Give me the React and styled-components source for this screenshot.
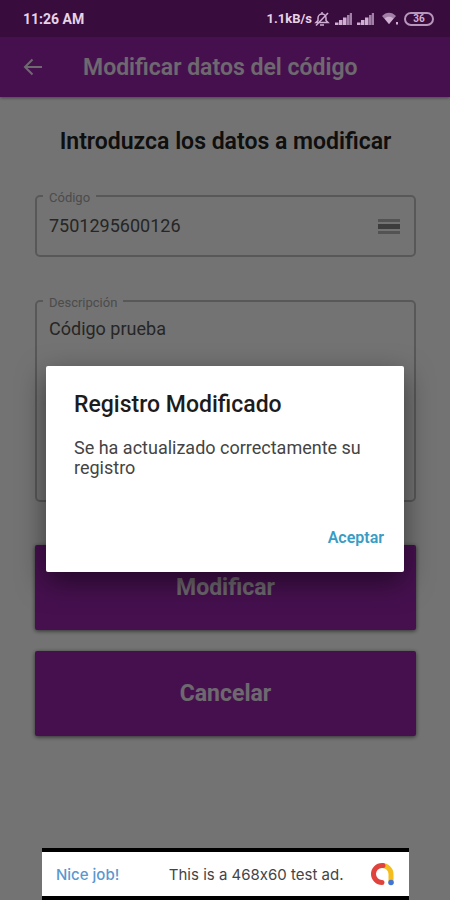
import React, { useState } from 'react';
import styled, { createGlobalStyle } from 'styled-components';

const App = () => {
    const [code, setCode] = useState('7501295600126');
    const [description, setDescription] = useState('Código prueba');
    const [open, setOpen] = useState(true);
    const handleSubmit = (e) => {
        e.preventDefault();
        setOpen(true);
    };
    return (
        <Screen>
            <GlobalStyle />
            <StatusBar>
                <span>11:26 AM</span>
                <StatusIcons>
                    <Network>
                        <span>1.1kB/s</span>
                        <MutedBell />
                    </Network>
                    <Signal />
                    <Signal />
                    <Power>
                        <Wifi />
                        <Battery>36</Battery>
                    </Power>
                </StatusIcons>
            </StatusBar>
            <Header>
                <BackButton type="button" aria-label="Atrás">
                    <svg width="20" height="18" viewBox="0 0 20 18">
                        <path
                            d="M9.5 1.5L2 9l7.5 7.5M2 9h17"
                            fill="none"
                            stroke="currentColor"
                            strokeWidth="2"
                        />
                    </svg>
                </BackButton>
                <HeaderTitle>Modificar datos del código</HeaderTitle>
            </Header>
            <Form onSubmit={handleSubmit}>
                <Heading>Introduzca los datos a modificar</Heading>
                <Field>
                    <Legend>
                        <label htmlFor="code">Código</label>
                    </Legend>
                    <FieldRow>
                        <Input
                            id="code"
                            type="text"
                            value={code}
                            onChange={(e) => setCode(e.target.value)}
                        />
                        <ScanButton type="button" aria-label="Escanear">
                            <svg width="22" height="16" viewBox="0 0 22 16">
                                <path
                                    d="M0 0h22v3H0zM0 12h22v3H0z"
                                    fill="currentColor"
                                    opacity="0.6"
                                />
                                <path d="M0 5h22v5H0z" fill="currentColor" />
                            </svg>
                        </ScanButton>
                    </FieldRow>
                </Field>
                <Field>
                    <Legend>
                        <label htmlFor="description">Descripción</label>
                    </Legend>
                    <TextArea
                        id="description"
                        value={description}
                        onChange={(e) => setDescription(e.target.value)}
                    />
                </Field>
                <ButtonGroup>
                    <Button type="submit">Modificar</Button>
                    <Button type="button">Cancelar</Button>
                </ButtonGroup>
            </Form>
            {open && (
                <Overlay>
                    <Dialog role="dialog" aria-modal="true" aria-labelledby="dialogTitle">
                        <DialogTitle id="dialogTitle">Registro Modificado</DialogTitle>
                        <DialogText>Se ha actualizado correctamente su registro</DialogText>
                        <DialogButton type="button" onClick={() => setOpen(false)}>
                            Aceptar
                        </DialogButton>
                    </Dialog>
                </Overlay>
            )}
            <Banner href="#ad">
                <BannerLead>Nice job!</BannerLead>
                <BannerText>This is a 468x60 test ad.</BannerText>
                <AdLogo />
            </Banner>
        </Screen>
    );
};

const MutedBell = () => (
    <svg width="16" height="16" viewBox="0 0 16 16" fill="none" stroke="currentColor">
        <path d="M2 11.5h12l-2-2V7a4 4 0 0 0-8 0v2.5zM6 14h4M8 3V1" strokeWidth="1.5" />
        <path d="M14 2L2 14.5" strokeWidth="1.5" />
    </svg>
);

const Signal = () => (
    <svg width="17" height="12" viewBox="0 0 17 12" fill="currentColor">
        <path d="M0 9.5h3.5V12H0zM4 7h3.5v5H4zM8 4.500h3.5V12H8z" />
        <path d="M12 2h2.500v10H12zM14.800 0H17v12h-2.200z" opacity="0.7" />
    </svg>
);

const Wifi = () => (
    <svg width="17" height="13" viewBox="0 0 17 13" fill="currentColor">
        <path d="M0 4C4-.5 10-.5 14 4L7 12z" opacity="0.7" />
        <path d="M2.500 6.500c2.500-2.500 6.500-2.500 9 0L7 12z" />
        <path d="M14 10h2v2.500h-2z" />
    </svg>
);

const AdLogo = () => (
    <svg width="26" height="24" viewBox="0 0 26 24" fill="none">
        <path d="M13 3.500a9 8.500 0 0 1 9 8.500v7" stroke="#f5be1c" strokeWidth="5" />
        <path
            d="M14 3.500h-1a8.500 8.500 0 0 0 0 17"
            stroke="#e0433b"
            strokeWidth="5"
            strokeLinecap="round"
        />
        <circle cx="22" cy="20.500" r="2.800" fill="#4274d6" />
    </svg>
);

const GlobalStyle = createGlobalStyle`
    * {
        box-sizing: border-box;
    }
    body {
        margin: 0;
        font-family: Roboto, 'Liberation Sans', sans-serif;
    }
    button,
    input,
    textarea {
        margin: 0;
        border: none;
        background: none;
        font: inherit;
        color: inherit;
    }
`;
const Screen = styled.div`
    position: relative;
    min-height: 100vh;
    display: flex;
    flex-direction: column;
    background: #fff;
`;
const StatusBar = styled.div`
    position: relative;
    z-index: 2;
    height: 37px;
    padding: 0 16px 0 23px;
    display: flex;
    align-items: center;
    justify-content: space-between;
    background: #380c3d;
    color: #e6d3e8;
    font-size: 14px;
    font-weight: 700;
`;
const StatusIcons = styled.div`
    display: flex;
    align-items: center;
    gap: 5px;
    color: #cfb0d3;
`;
const Network = styled.div`
    display: flex;
    align-items: center;
    gap: 2px;
    font-size: 13px;
    span {
        color: #e6d3e8;
    }
`;
const Power = styled.div`
    display: flex;
    align-items: center;
    gap: 5px;
    padding-left: 3px;
`;
const Battery = styled.span`
    width: 30px;
    height: 14px;
    border: 2px solid #b796bb;
    border-radius: 7px;
    font-size: 10px;
    line-height: 10px;
    text-align: center;
`;
const Header = styled.header`
    height: 60px;
    padding: 0 16px;
    display: flex;
    align-items: center;
    background: #9c24b0;
    color: #f4e8f6;
    box-shadow: 0 1px 3px rgba(0, 0, 0, 0.4);
`;
const BackButton = styled.button`
    width: 34px;
    height: 34px;
    padding: 0;
    display: flex;
    align-items: center;
    justify-content: center;
`;
const HeaderTitle = styled.h1`
    margin: 0 0 0 33px;
    font-size: 23px;
    font-weight: 600;
`;
const Form = styled.form`
    padding: 31px 34px 30px 35px;
    display: flex;
    flex-direction: column;
`;
const Heading = styled.h2`
    margin: 0 0 31px;
    font-size: 23px;
    line-height: 28px;
    font-weight: 600;
    text-align: center;
    color: #222;
`;
const Field = styled.fieldset`
    min-width: 0;
    margin: 0 0 35px;
    padding: 0 6px;
    border: 2px solid #c4c4c4;
    border-radius: 5px;
`;
const Legend = styled.legend`
    padding: 4px 6px 0;
    font-size: 13px;
    line-height: 14px;
    color: #a8a8a8;
`;
const FieldRow = styled.div`
    height: 50px;
    padding: 0 8px 10px 0;
    display: flex;
    align-items: center;
`;
const Input = styled.input`
    flex-grow: 1;
    min-width: 0;
    padding: 0 6px;
    font-size: 18px;
    color: #555;
`;
const ScanButton = styled.button`
    padding: 4px 0 0;
    display: flex;
    color: #888;
`;
const TextArea = styled.textarea`
    display: block;
    width: 100%;
    height: 190px;
    padding: 8px 6px;
    font-size: 18px;
    line-height: 22px;
    color: #555;
    resize: none;
`;
const ButtonGroup = styled.div`
    margin-top: 8px;
    display: flex;
    flex-direction: column;
    gap: 21px;
`;
const Button = styled.button`
    height: 85px;
    border-radius: 2px;
    background: #9c24b0;
    color: #f4e8f6;
    font-size: 23px;
    font-weight: 700;
    box-shadow: 0 1px 4px rgba(0, 0, 0, 0.6);
`;
const Overlay = styled.div`
    position: absolute;
    inset: 0;
    padding: 37px 46px 0;
    display: flex;
    align-items: center;
    justify-content: center;
    background: rgba(0, 0, 0, 0.55);
`;
const Dialog = styled.div`
    flex-grow: 1;
    padding: 24px 20px 20px 28px;
    display: flex;
    flex-direction: column;
    border-radius: 2px;
    background: #fff;
    box-shadow: 0 10px 28px rgba(0, 0, 0, 0.5);
`;
const DialogTitle = styled.h2`
    margin: 0 0 18px;
    font-size: 23px;
    line-height: 30px;
    font-weight: 500;
    color: #1c1c1c;
`;
const DialogText = styled.p`
    margin: 0 0 46px;
    font-size: 18px;
    line-height: 20px;
    color: #444;
`;
const DialogButton = styled.button`
    align-self: flex-end;
    padding: 0;
    font-size: 16px;
    line-height: 28px;
    font-weight: 600;
    color: #3a9cc4;
`;
const Banner = styled.a`
    z-index: 2;
    height: 52px;
    margin: auto 41px 0 42px;
    padding: 0 14px;
    display: flex;
    align-items: center;
    justify-content: space-between;
    border: solid #000;
    border-width: 4px 0;
    background: #fff;
    font-family: Inter, 'Open Sans', sans-serif;
    font-size: 15px;
    font-feature-settings: 'calt' 0;
    text-decoration: none;
`;
const BannerLead = styled.span`
    font-weight: 500;
    color: #5b97cf;
`;
const BannerText = styled.span`
    margin-left: 24px;
    color: #444;
`;
export default App;
